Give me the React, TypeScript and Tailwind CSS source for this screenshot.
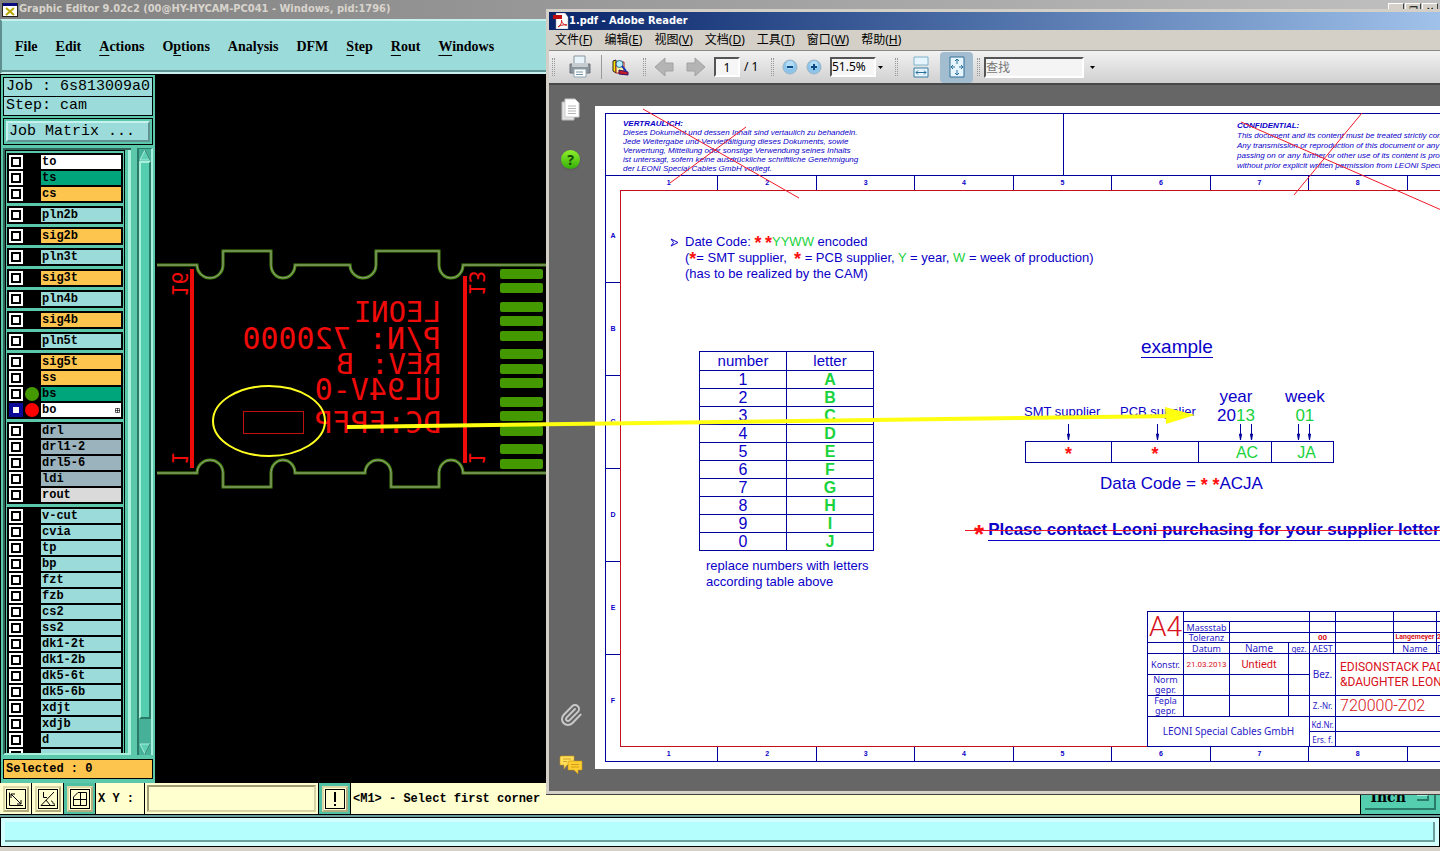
import type { ReactNode } from 'react';
import { Paperclip } from 'lucide-react';
import clsx from 'clsx';

const MENU = [
  ['', 'F', 'ile'],
  ['', 'E', 'dit'],
  ['', 'A', 'ctions'],
  ['O', 'p', 'tions'],
  ['Analysis', '', ''],
  ['DFM', '', ''],
  ['', 'S', 'tep'],
  ['', 'R', 'out'],
  ['', 'W', 'indows'],
];

type Layer = { name: string; tone: string; dot?: string; active?: boolean };

const PALE = 'bg-[#9bdbda]';
const ORANGE = 'bg-[#fdc44e]';
const GREEN = 'bg-[#00a57c]';
const SLATE = 'bg-[#9bb3bd]';

const pale = (...names: string[]): Layer[] => names.map((name) => ({ name, tone: PALE }));

const LAYER_GROUPS: Layer[][] = [
  [
    { name: 'to', tone: 'bg-white' },
    { name: 'ts', tone: GREEN },
    { name: 'cs', tone: ORANGE },
  ],
  pale('pln2b'),
  [{ name: 'sig2b', tone: ORANGE }],
  pale('pln3t'),
  [{ name: 'sig3t', tone: ORANGE }],
  pale('pln4b'),
  [{ name: 'sig4b', tone: ORANGE }],
  pale('pln5t'),
  [
    { name: 'sig5t', tone: ORANGE },
    { name: 'ss', tone: ORANGE },
    { name: 'bs', tone: GREEN, dot: 'bg-[#449800]' },
    { name: 'bo', tone: 'bg-white', dot: 'bg-[#ff0000]', active: true },
  ],
  [
    { name: 'drl', tone: SLATE },
    { name: 'drl1-2', tone: SLATE },
    { name: 'drl5-6', tone: SLATE },
    { name: 'ldi', tone: SLATE },
    { name: 'rout', tone: 'bg-[#dadada]' },
  ],
  pale('v-cut', 'cvia', 'tp', 'bp', 'fzt', 'fzb', 'cs2', 'ss2', 'dk1-2t', 'dk1-2b', 'dk5-6t', 'dk5-6b', 'xdjt', 'xdjb', 'd', ''),
];

const PADS = [39, 53, 72, 86, 101, 119, 134, 148, 167, 181, 196, 214, 229];

const SILK = [
  { y: 92, size: 29, text: 'LEONI' },
  { y: 119, size: 30, text: 'P/N: 720000' },
  { y: 144, size: 29, text: 'REV: B' },
  { y: 170, size: 30, text: 'UL94V-0' },
  { y: 203, size: 30, text: 'DC:FPFP' },
];

const CODES = ['A', 'B', 'C', 'D', 'E', 'F', 'G', 'H', 'I', 'J'];

export default function App() {
  return (
    <div className="relative flex h-screen flex-col overflow-hidden bg-black">
      <EditorTitle />
      <EditorMenu />
      <div className="flex min-h-0 flex-1">
        <LayerPanel />
        <main className="flex-1 overflow-hidden bg-black pt-[155px]">
          <Board />
        </main>
      </div>
      <PromptBar />
      <div className="border-b-4 border-[#d4d0c8] bg-[#6a9f9c] pt-0.5">
        <div className="border border-black bg-[#d2fffd] p-1">
          <div className="h-5 border-b-2 border-r-2 border-[#6a9f9c] bg-[#b4fffd]" />
        </div>
      </div>
      <ReaderWindow />
      <Arrow />
    </div>
  );
}

/* ---------- CAM editor ---------- */

function EditorTitle() {
  return (
    <header className="flex h-[19px] shrink-0 items-center gap-px bg-linear-to-r from-[#808080] to-[#c0c0c0] px-0.5">
      <svg viewBox="0 0 16 16" className="size-4">
        <rect x="0.5" y="1.5" width="15" height="13" fill="#fff" stroke="#222" />
        <rect x="1" y="1" width="14" height="3" fill="#0a0a80" />
        <path d="M4 6l8 7M12 6l-8 7" stroke="#b8a800" strokeWidth="2" />
      </svg>
      <h1 className="flex-1 font-['DejaVu_Sans_Condensed'] text-[11px] font-bold text-[#d8d4cc]">
        Graphic Editor 9.02c2 (00@HY-HYCAM-PC041 - Windows, pid:1796)
      </h1>
      <div className="flex gap-px">
        {['_', '❐', '✕'].map((glyph) => (
          <button key={glyph} className="h-3.5 w-4 border border-b-[#404040] border-l-white border-r-[#404040] border-t-white bg-[#d4d0c8] text-[10px] leading-3">
            {glyph}
          </button>
        ))}
      </div>
    </header>
  );
}

function EditorMenu() {
  return (
    <nav className="mb-px flex h-[55px] shrink-0 items-center gap-[18px] border-2 border-b-[#c5f2ee] border-l-[#5f8f8e] border-r-[#5f8f8e] border-t-[#c5f2ee] bg-[#9bdbda] px-[13px] font-['Liberation_Serif'] text-[14px] font-bold text-black shadow-[inset_0_-2px_0_#5f9493]">
      {MENU.map(([before, key, after]) => (
        <button key={before + key + after}>
          {before}
          <span className="underline underline-offset-4">{key}</span>
          {after}
        </button>
      ))}
    </nav>
  );
}

function LayerPanel() {
  return (
    <aside className="flex w-[155px] shrink-0 flex-col border-l border-black bg-[#5cc8ab] px-0.5 pb-1 pt-0.5 font-['Liberation_Mono'] text-black">
      <div className="h-5 whitespace-nowrap border border-black bg-[#9bdbda] px-0.5 text-[15px] leading-[18px]">Job : 6s813009a0</div>
      <div className="-mt-px h-5 border border-black bg-[#9bdbda] px-0.5 text-[15px] leading-[18px]">Step: cam</div>
      <div className="mt-0.5 border border-black p-0.5">
        <button className="block h-[21px] w-full border-2 border-b-[#5f9493] border-l-[#c5f2ee] border-r-[#5f9493] border-t-[#c5f2ee] bg-[#9bdbda] px-px text-left text-[15px] leading-[17px]">
          Job Matrix ...
        </button>
      </div>
      <div className="mt-[3px] flex min-h-0 flex-1 gap-1.5">
        <div className="flex min-w-0 flex-1 border-b-2 border-l-2 border-t-2 border-b-[#a8efdc] border-l-[#31655a] border-t-[#31655a]">
          <div className="flex w-[123px] flex-col gap-[3px] overflow-hidden border-x border-t border-black p-px pt-0.5">
            {LAYER_GROUPS.map((group) => (
              <div key={group[0].name} className="flex shrink-0 flex-col gap-0.5 bg-black p-0.5">
                {group.map((layer) => (
                  <LayerRow key={layer.name} layer={layer} />
                ))}
              </div>
            ))}
          </div>
          <div className="w-[3px]" />
          <div className="w-[3px] bg-[#a8efdc]" />
        </div>
        <div className="flex w-4 flex-col border-l-2 border-r-2 border-t border-l-[#2a7a68] border-r-[#a8efdc] border-t-[#2a7a68] bg-[#47b098]">
          <svg viewBox="0 0 12 12" className="h-3 w-full shrink-0">
            <path d="M6 1L11 11H1z" fill="#5fd0b4" stroke="#a8efdc" />
            <path d="M6 1L11 11" stroke="#2a7a68" />
          </svg>
          <div className="flex-1 border-2 border-b-[#2a7a68] border-l-[#a8efdc] border-r-[#2a7a68] border-t-[#a8efdc] bg-[#55ceb0]" />
          <div className="h-6" />
          <svg viewBox="0 0 12 12" className="h-3 w-full shrink-0">
            <path d="M1 1h10L6 11z" fill="#5fd0b4" stroke="#a8efdc" />
            <path d="M11 1L6 11" stroke="#2a7a68" />
          </svg>
        </div>
      </div>
      <div className="mt-1 h-5 border border-black bg-[#fdc44e] px-0.5 text-[12px] font-bold leading-[18px]">Selected : 0</div>
    </aside>
  );
}

function LayerRow({ layer }: { layer: Layer }) {
  return (
    <label className="flex h-3.5 text-[12px] font-bold leading-3.5">
      <span className={clsx('flex w-3.5 items-center justify-center', layer.active ? 'bg-[#0a0a96]' : 'bg-white')}>
        <input
          type="checkbox"
          className={clsx('size-2.5 appearance-none border-2 bg-white', layer.active ? 'border-[#0a0a96]' : 'border-black')}
        />
      </span>
      <span className="flex w-[18px] justify-center">
        {layer.dot && <span className={clsx('size-3.5 rounded-full', layer.dot)} />}
      </span>
      <span className={clsx('flex flex-1 items-center justify-between px-px', layer.tone)}>
        {layer.name}
        {layer.active && (
          <svg viewBox="0 0 5 5" className="size-[5px]" fill="none" stroke="#000">
            <path d="M.5 .5h4v4h-4zM2.5 0v5M0 2.5h5" strokeWidth=".6" />
          </svg>
        )}
      </span>
    </label>
  );
}

function Board() {
  const top = 'M2 35H42A13 13 0 0 0 68 35V21H116V35A12 13 0 0 0 140 35H195A13 13 0 0 0 221 35V21H284V35A12 13 0 0 0 308 35H391';
  const bottom = 'M2 243H42A13 13 0 0 1 68 243V257H116V243A12 13 0 0 1 140 243H210A13 13 0 0 1 236 243V257H284V243A12 13 0 0 1 308 243H391';
  return (
    <svg viewBox="0 0 395 270" width="395" height="270" fontFamily="DejaVu Sans Mono" fill="#f00b0b">
      <g fill="none">
        <path d={top + bottom} stroke="#4a8f10" strokeWidth="3" />
        <path d={top + bottom} stroke="#94918a" strokeWidth="1" />
      </g>
      <path d="M37 39V238M310 46V233" stroke="#f00b0b" strokeWidth="4" />
      {PADS.map((y) => (
        <rect key={y} x="345" y={y} width="43" height="10" rx="2" fill="#449800" />
      ))}
      {SILK.map((line) => (
        <text key={line.text} fontSize={line.size} transform={`translate(286 ${line.y}) scale(-1 1)`} xmlSpace="preserve">
          {line.text}
        </text>
      ))}
      <text fontSize="21" transform="translate(17 67) rotate(90) scale(-1 1)">16</text>
      <text fontSize="21" transform="translate(17 235) rotate(90) scale(-1 1)">1</text>
      <text fontSize="21" transform="translate(314 66) rotate(90) scale(-1 1)">13</text>
      <text fontSize="21" transform="translate(314 235) rotate(90) scale(-1 1)">1</text>
      <rect x="88.5" y="181.5" width="60" height="22" fill="none" stroke="#c01010" />
      <ellipse cx="114" cy="191" rx="56" ry="35" fill="none" stroke="#ffff20" strokeWidth="2" />
    </svg>
  );
}

function ToolButton({ label, lit, children }: { label: string; lit?: boolean; children: ReactNode }) {
  return (
    <button
      type="button"
      aria-label={label}
      className={clsx('flex w-[31px] items-center justify-center', lit ? 'bg-[#4fc0a2]' : 'bg-[#ffffcf]')}
    >
      <span className="flex size-[26px] items-center justify-center border-2 border-b-[#b0ac80] border-l-[#dcd8a8] border-r-[#b0ac80] border-t-[#dcd8a8] bg-[#ffffcf]">
        <svg viewBox="0 0 20 20" className="size-5" fill="none" stroke="#000">
          <rect x=".5" y=".5" width="19" height="19" />
          {children}
        </svg>
      </span>
    </button>
  );
}

function PromptBar() {
  return (
    <form className="flex h-8 shrink-0 gap-px bg-black pb-px font-['Liberation_Mono'] text-[12px] font-bold text-black">
      <ToolButton label="Zoom">
        <path d="M3.500 3.500V16.500H17M5 5L15 15M5 9V5H9M15 11v4h-4" />
      </ToolButton>
      <ToolButton label="Angle">
        <path d="M3 16.500H17M3 16.500L16 3M5.500 3V8.500H9M8 11l4 5M13 12c3 0 1 4 4 3" />
      </ToolButton>
      <ToolButton label="Grid" lit>
        <path d="M3.500 17V8L8 3.500H16.500V16.500H3.500M3.500 10.500H16.500M10.500 3.500V16.500" />
      </ToolButton>
      <label htmlFor="xy" className="flex w-12 items-center whitespace-pre bg-[#ffffcf] pl-0.5">X Y :</label>
      <div className="w-[173px] bg-[#ffffcf] p-0.5">
        <input id="xy" className="h-full w-full border-2 border-b-[#d8d4a4] border-l-[#a09c74] border-r-[#d8d4a4] border-t-[#a09c74] bg-[#ffffcf] px-1 outline-none" />
      </div>
      <ToolButton label="Alert" lit>
        <path d="M10 3V13M10 15v2" strokeWidth="2" />
      </ToolButton>
      <output className="flex flex-1 items-center bg-[#ffffcf] pl-0.5">&lt;M1&gt; - Select first corner</output>
      <div className="w-[79px] bg-[#55ceb0] p-1">
        <button type="button" className="flex h-full w-full items-center justify-around border-b-2 border-r-2 border-[#2a7a68] font-['DejaVu_Serif'] text-[14px]">
          Inch
          <span className="h-1.5 w-3 border-b-2 border-r-2 border-t border-[#2a7a68] border-t-[#a8efdc]" />
        </button>
      </div>
    </form>
  );
}

/* ---------- PDF reader ---------- */

const READER_MENU = [
  ['文件', 'F'],
  ['编辑', 'E'],
  ['视图', 'V'],
  ['文档', 'D'],
  ['工具', 'T'],
  ['窗口', 'W'],
  ['帮助', 'H'],
];

function ReaderWindow() {
  return (
    <section className="absolute bottom-[57px] left-[546px] right-0 top-[9px] flex flex-col border-b-[3px] border-l-[3px] border-t-[3px] border-[#d4d0c8] bg-[#666] font-['Noto_Sans','Noto_Sans_CJK_SC',sans-serif] shadow-[0_1px_0_#404040]">
      <header className="flex h-[18px] shrink-0 items-center bg-linear-to-r from-[#0a246a] to-[#a0c2ea] pl-1">
        <svg viewBox="0 0 16 16" className="size-4">
          <path d="M3 0H12L15 4V16H3z" fill="#fff" stroke="#999" strokeWidth=".5" />
          <path d="M0 2h9v4H0z" fill="#c00d0d" />
          <path d="M5 14c3-2 4-5 3.500-7c0 3 2 5 5.500 5c-4-.5-6 0-9 2z" fill="none" stroke="#d02020" />
        </svg>
        <h2 className="font-['DejaVu_Sans_Condensed'] text-[11px] font-bold text-white">1.pdf - Adobe Reader</h2>
      </header>
      <nav className="flex h-5 shrink-0 items-center gap-3 bg-[#d4d0c8] pl-1.5 text-[12px] text-black">
        {READER_MENU.map(([label, key]) => (
          <button key={key} className="leading-5">
            {label}(<span className="underline">{key}</span>)
          </button>
        ))}
      </nav>
      <ReaderToolbar />
      <div className="flex min-h-0 flex-1 border-t-2 border-[#484848] pt-[21px]">
        <Sidebar />
        <Sheet />
      </div>
    </section>
  );
}

function ToolGroup({ className, children }: { className: string; children: ReactNode }) {
  return (
    <div className={clsx('flex items-center', className)}>
      <span className="h-[18px] w-[3px] border-x border-dotted border-[#999]" />
      {children}
    </div>
  );
}

function ReaderToolbar() {
  return (
    <div className="flex h-[33px] shrink-0 border-t border-[#8a8a8a] bg-linear-to-b from-[#f2f2f2] to-[#d0d0d0] pl-[3px] text-black">
      <ToolGroup className="w-[91px] justify-between pr-3.5">
        <button aria-label="Print" className="pl-1">
          <svg viewBox="0 0 24 24" className="size-6">
            <path d="M6 1h11v8H6z" fill="#e8f4fa" stroke="#8a949c" />
            <path d="M2 9h20v9H2z" fill="#8b949b" stroke="#6d757b" />
            <path d="M4 8h16v4H4z" fill="#c6ccd0" />
            <path d="M6 14h12v8H6z" fill="#fff" stroke="#8fa5b2" />
            <path d="M8 17h7M8 19.500h7" stroke="#7895a5" />
          </svg>
        </button>
        <span className="h-6 w-px bg-[#999]" />
        <button aria-label="Organize">
          <svg viewBox="0 0 18 18" className="size-[18px]">
            <path d="M2 3l3-1v13l-3-2z" fill="#ffe600" stroke="#222" />
            <path d="M5 4h8v11H5z" fill="#fff5a0" stroke="#b02020" />
            <path d="M8 12l9 2v3l-9-1z" fill="#c41a2a" stroke="#301060" />
            <circle cx="8.500" cy="6" r="3.500" fill="#b8ecff" stroke="#2a6a90" />
            <path d="M11 8l4 5" stroke="#1030c0" strokeWidth="2" />
          </svg>
        </button>
      </ToolGroup>
      <ToolGroup className="w-32 gap-2">
        <button aria-label="Previous page">
          <svg viewBox="0 0 20 20" className="size-5"><path d="M1 10L11 1v5h8v8h-8v5z" fill="#b4b4b4" stroke="#a2a2a2" /></svg>
        </button>
        <button aria-label="Next page" className="pl-1">
          <svg viewBox="0 0 20 20" className="size-5"><path d="M19 10L9 1v5H1v8h8v5z" fill="#b4b4b4" stroke="#a2a2a2" /></svg>
        </button>
        <input aria-label="Page" defaultValue="1" className="h-5 w-[26px] border-2 border-b-white border-l-[#555] border-r-white border-t-[#555] bg-[#f6f6f6] text-center text-[12px] outline-none" />
        <span className="-ml-1 whitespace-nowrap text-[12px]">/ 1</span>
      </ToolGroup>
      <ToolGroup className="w-[124px] gap-2">
        <ZoomButton label="Zoom out" path="M5 8h6" />
        <ZoomButton label="Zoom in" path="M5 8h6M8 5v6" />
        <div className="flex items-center">
          <select aria-label="Zoom" className="h-5 w-[46px] appearance-none border-2 border-b-white border-l-[#555] border-r-white border-t-[#555] bg-[#f6f6f6] text-[12px] leading-4 outline-none">
            <option>51.5%</option>
          </select>
          <Caret />
        </div>
      </ToolGroup>
      <ToolGroup className="w-[82px] justify-between pr-1">
        <button aria-label="Fit width" className="pl-1">
          <svg viewBox="0 0 18 22" className="h-[22px] w-[18px]">
            <path d="M2 1h14v8H2z" fill="#e6f5fd" stroke="#7fb2cc" />
            <path d="M2 12h14v9H2z" fill="#e6f5fd" stroke="#3a7fa5" />
            <path d="M4 16.500h10M6 14.500l-2 2 2 2M12 14.500l2 2-2 2" fill="none" stroke="#2a6f9a" />
          </svg>
        </button>
        <button aria-label="Fit page" className="flex h-[31px] w-[33px] items-center justify-center rounded bg-[#a3bdd0]">
          <svg viewBox="0 0 18 22" className="h-[22px] w-[18px]">
            <path d="M2 1h14v20H2z" fill="#e6f5fd" stroke="#2d6f96" />
            <path d="M9 3v5M9 14v5M4 11h3M11 11h3M7 5l2-2 2 2M7 17l2 2 2-2M5 9l-2 2 2 2M13 9l2 2-2 2" fill="none" stroke="#2a6f9a" />
          </svg>
        </button>
      </ToolGroup>
      <ToolGroup className="gap-1">
        <input aria-label="查找" placeholder="查找" className="h-[21px] w-[100px] border-2 border-b-white border-l-[#555] border-r-white border-t-[#555] bg-[#f4f4f4] text-[12px] outline-none placeholder:text-[#777]" />
        <Caret />
      </ToolGroup>
    </div>
  );
}

function ZoomButton({ label, path }: { label: string; path: string }) {
  return (
    <button aria-label={label}>
      <svg viewBox="0 0 16 16" className="size-4">
        <circle cx="8" cy="8" r="7" fill="#8cc4ea" stroke="#9cb4c4" />
        <circle cx="8" cy="6" r="4" fill="#b4dcf5" />
        <path d={path} stroke="#0d4a86" strokeWidth="2" />
      </svg>
    </button>
  );
}

function Caret() {
  return <svg viewBox="0 0 5 3" className="mx-0.5 h-[3px] w-[5px]"><path d="M0 0h5L2.500 3z" /></svg>;
}

function Sidebar() {
  return (
    <div className="flex w-[46px] shrink-0 flex-col items-center pb-4 pr-[3px]">
      <button aria-label="Pages" className="-mt-2">
        <svg viewBox="0 0 20 24" className="h-6 w-5">
          <path d="M1 4h12v18H1z" fill="#e4e4e4" stroke="#bbb" />
          <path d="M4 1h10l4 4v14H4z" fill="#fff" stroke="#ccc" />
          <path d="M7 8h8M7 10.500h8M7 13h8M7 15.500h8" stroke="#b5b5b5" />
        </svg>
      </button>
      <button aria-label="Help" className="mt-7 flex size-[19px] items-center justify-center rounded-full bg-linear-to-b from-[#8df02a] to-[#2fae08] text-[14px] font-bold leading-none text-[#154808] shadow">
        ?
      </button>
      <div className="flex-1" />
      <button aria-label="Attachments">
        <Paperclip className="size-6 text-[#c9c9c9]" strokeWidth={2} />
      </button>
      <button aria-label="Comments" className="mt-7">
        <svg viewBox="0 0 24 20" className="h-5 w-6" stroke="#c99612" strokeWidth=".6">
          <path d="M2 1h13v9H8l-3 4V10H1V2z" fill="#ffdf5c" />
          <path d="M10 6h13v9h-4v4l-4-4H9V7z" fill="#ffcf33" />
          <path d="M4 4h8M4 6.500h4M12 9.500h8M12 12h8" stroke="#b47a00" />
        </svg>
      </button>
    </div>
  );
}

function Ruler() {
  return (
    <div className="flex h-3.5 shrink-0 pl-3.5 text-[7px] font-bold leading-3.5">
      {[1, 2, 3, 4, 5, 6, 7, 8, 9].map((n) => (
        <span key={n} className="flex-1 border-r border-[#00009c] text-center">{n}</span>
      ))}
    </div>
  );
}

function Star() {
  return <b className="align-middle text-[18px] leading-[0] text-[#ff1010]">*</b>;
}

function Go({ children }: { children: ReactNode }) {
  return <span className="text-[#19d23c]">{children}</span>;
}

function Sheet() {
  return (
    <article className="relative mb-[22px] w-[920px] shrink-0 bg-white py-[7px] pl-2.5 font-['Liberation_Sans'] text-[#0a00c8]">
      <div className="flex h-full w-[902px] flex-col border border-[#00009c]">
        <div className="flex h-[62px] shrink-0 border-b border-[#00009c] text-[8px] italic">
          <div className="w-[458px] border-r border-[#00009c] pl-[17px] pt-[5px] leading-[9px]">
            <p className="font-bold">VERTRAULICH:</p>
            <p>Dieses Dokument und dessen Inhalt sind vertaulich zu behandeln.</p>
            <p>Jede Weitergabe und Vervielfältigung dieses Dokuments, sowie</p>
            <p>Verwertung, Mitteilung oder sonstige Verwendung seines Inhalts</p>
            <p>ist untersagt, sofern keine ausdrückliche schriftliche Genehmigung</p>
            <p>der LEONI Special Cables GmbH vorliegt.</p>
          </div>
          <div className="whitespace-nowrap pl-[173px] pt-[7px] leading-[10px]">
            <p className="font-bold">CONFIDENTIAL:</p>
            <p>This document and its content must be treated strictly confidential.</p>
            <p>Any transmission or reproduction of this document or any</p>
            <p>passing on or any further or other use of its content is prohibited</p>
            <p>without prior explicit written permission from LEONI Special</p>
          </div>
        </div>
        <Ruler />
        <div className="flex min-h-0 flex-1">
          <div className="flex w-3.5 flex-col text-[7px] font-bold">
            {['A', 'B', 'C', 'D', 'E', 'F'].map((row) => (
              <span key={row} className="flex flex-1 items-center justify-center border-b border-[#00009c] last:border-b-0">{row}</span>
            ))}
          </div>
          <div className="relative flex-1 border-b border-l border-t border-[#c4101c]">
            <Drawing />
          </div>
        </div>
        <Ruler />
      </div>
      <svg className="absolute left-0 top-0 h-full w-full" viewBox="0 0 920 663" preserveAspectRatio="xMinYMin slice" stroke="#f01828" fill="none">
        <path d="M48 3L204 92M151 21L75 77M646 16L860 110M767 7L699 89" />
        <path d="M370 424.500H920" />
      </svg>
    </article>
  );
}

/* Notes, tables and title block, free-standing on the drawing sheet */
function Drawing() {
  return (
    <>
      <svg viewBox="0 0 9 9" className="absolute left-[49px] top-[47px] size-[9px]" fill="none" stroke="#0a00c8">
        <path d="M1 1L8 4.500L1 8L3.500 4.500z" />
      </svg>
      <div className="absolute left-[64px] top-[43px] whitespace-pre text-[13px] leading-4">
        <p>Date Code: <Star /> <Star /><Go>YYWW</Go> encoded</p>
        <p>(<Star />= SMT supplier,  <Star /> = PCB supplier, <Go>Y</Go> = year, <Go>W</Go> = week of production)</p>
        <p>(has to be realized by the CAM)</p>
      </div>

      <table className="absolute left-[78px] top-[160px] w-[175px] table-fixed border-collapse text-center text-[16px] leading-[17px] [&_td]:border [&_td]:border-[#00009c] [&_td]:p-0 [&_th]:border [&_th]:border-[#00009c] [&_th]:p-0">
        <thead>
          <tr className="text-[15px] leading-[18px]">
            <th className="font-normal">number</th>
            <th className="font-normal">letter</th>
          </tr>
        </thead>
        <tbody>
          {CODES.map((letter, i) => (
            <tr key={letter}>
              <td>{(i + 1) % 10}</td>
              <td className="font-bold text-[#19d23c]">{letter}</td>
            </tr>
          ))}
        </tbody>
      </table>
      <p className="absolute left-[85px] top-[367px] whitespace-nowrap text-[13px] leading-4">
        replace numbers with letters
        <br />
        according table above
      </p>

      <h3 className="absolute left-[520px] top-[146px] border-b border-[#0a00c8] text-[19px] leading-5">example</h3>
      <p className="absolute left-[403px] top-[213px] text-[13px] leading-4">SMT supplier</p>
      <p className="absolute left-[499px] top-[213px] text-[13px] leading-4">PCB supplier</p>
      <p className="absolute left-[596px] top-[196px] text-center text-[17px] leading-[19px]">year<br />20<Go>13</Go></p>
      <p className="absolute left-[664px] top-[196px] text-center text-[17px] leading-[19px]">week<br /><Go>01</Go></p>
      <svg viewBox="0 0 260 18" className="absolute left-[440px] top-[233px] h-[18px] w-[260px]" fill="#00009c" stroke="#00009c">
        {[7, 96, 179, 190, 237, 248].map((x) => (
          <path key={x} d={`M${x + 0.5} 0V16M${x - 0.5} 10h2l-1 6z`} />
        ))}
      </svg>
      <div className="absolute left-[404px] top-[250px] flex h-[22px] w-[309px] divide-x divide-[#00009c] border border-[#00009c] text-center text-[16px] leading-[22px]">
        <span className="w-[86px]"><Star /></span>
        <span className="w-[87px]"><Star /></span>
        <span className="w-[73px] pl-6"><Go>AC</Go></span>
        <span className="flex-1 pl-2"><Go>JA</Go></span>
      </div>
      <p className="absolute left-[479px] top-[283px] whitespace-nowrap text-[17px] leading-5">Data Code = <Star /> <Star />ACJA</p>
      <p className="absolute left-[353px] top-[329px] flex items-start gap-1 whitespace-nowrap text-[17px] font-bold leading-5">
        <span className="text-[26px] leading-7 text-[#ff1010]">*</span>
        <span className="border-b border-[#0a00c8]">Please contact Leoni purchasing for your supplier letter</span>
      </p>
      <TitleBlock />
    </>
  );
}

function TitleBlock() {
  return (
    <table className="absolute bottom-[-1px] left-[526px] w-[360px] table-fixed border-collapse bg-white text-center font-['Noto_Sans'] text-[9px] leading-[9px] text-[#2a20c8] [&_td]:whitespace-nowrap [&_td]:border [&_td]:border-[#00009c] [&_td]:p-0">
      <colgroup>
        <col className="w-9" />
        <col className="w-[46px]" />
        <col className="w-[59px]" />
        <col className="w-[21px]" />
        <col className="w-[26px]" />
        <col className="w-[58px]" />
        <col className="w-[43px]" />
        <col />
      </colgroup>
      <tbody>
        <tr className="h-2.5">
          <td rowSpan={3} className="font-['Roboto'] text-[28px] font-light leading-7 text-[#d81020]">A4</td>
          <td colSpan={3} />
          <td />
          <td />
          <td />
          <td />
        </tr>
        <tr className="h-[11px]">
          <td>Massstab</td>
          <td colSpan={2} />
          <td />
          <td />
          <td />
          <td />
        </tr>
        <tr className="h-2.5">
          <td>Toleranz</td>
          <td colSpan={2} />
          <td className="font-['Roboto'] text-[8px] font-bold text-[#d81020]">00</td>
          <td />
          <td className="font-['Roboto'] text-[7px] font-bold text-[#d81020]">Langemeyer</td>
          <td className="text-left font-['Roboto'] text-[7px] font-bold text-[#d81020]">21.03.2013</td>
        </tr>
        <tr className="h-[11px]">
          <td />
          <td>Datum</td>
          <td className="text-[10px]">Name</td>
          <td className="text-[8px]">gez.</td>
          <td>AEST</td>
          <td />
          <td>Name</td>
          <td className="text-left">Datum</td>
        </tr>
        <tr className="h-[21px]">
          <td>Konstr.</td>
          <td className="font-['Roboto'] text-[8px] text-[#d81020]">21.03.2013</td>
          <td className="font-['Roboto'] text-[11px] text-[#d81020]">Untiedt</td>
          <td />
          <td rowSpan={2} className="text-[10px]">Bez.</td>
          <td rowSpan={2} colSpan={3} className="text-left font-['Roboto'] text-[12px] leading-[15px] text-[#d81020]">
            <p className="pl-1">EDISONSTACK PADDLECARD</p>
            <p className="pl-1">&amp;DAUGHTER LEONI</p>
          </td>
        </tr>
        <tr className="h-[21px] leading-[10px]">
          <td>Norm<br />gepr.</td>
          <td />
          <td />
          <td />
        </tr>
        <tr className="h-[21px] leading-[10px]">
          <td>Fepla<br />gepr.</td>
          <td />
          <td />
          <td />
          <td className="text-[8px]">Z.-Nr.</td>
          <td colSpan={3} className="text-left font-['Roboto'] text-[16px] font-light leading-4 text-[#d81020]">
            <p className="pl-1">720000-Z02</p>
          </td>
        </tr>
        <tr className="h-[15px]">
          <td rowSpan={2} colSpan={4} className="text-[10px]">LEONI Special Cables GmbH</td>
          <td className="text-[8px]">Kd.Nr.</td>
          <td colSpan={3} />
        </tr>
        <tr className="h-[15px]">
          <td className="text-[8px]">Ers. f.</td>
          <td colSpan={3} />
        </tr>
      </tbody>
    </table>
  );
}

/* Pointer from the board's empty box to the date code example */
function Arrow() {
  return (
    <svg viewBox="0 0 850 24" className="pointer-events-none absolute left-[346px] top-[405px] h-6 w-[850px]" fill="#ffff10">
      <path d="M1 22L830 11" stroke="#ffff10" strokeWidth="4" />
      <path d="M819 2L849 10L820 19z" />
    </svg>
  );
}
